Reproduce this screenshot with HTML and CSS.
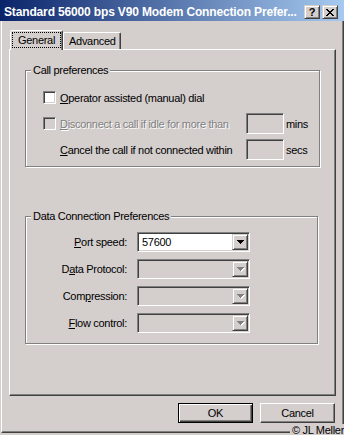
FILE: index.html
```html
<!DOCTYPE html>
<html lang="en">
  <head>
    <meta charset="UTF-8" />
    <meta name="viewport" content="width=device-width, initial-scale=1.0" />
    <title>Modem Connection Preferences</title>
    <link rel="stylesheet" href="styles.css">
  </head>
  <body>
    <div class="window">
      <div class="titlebar">
        <span class="title">Standard 56000 bps V90 Modem Connection Prefer...</span>
        <div class="caption-buttons">
          <span class="cap-btn help">?</span>
          <span class="cap-btn close">
            <svg width="8" height="7" viewBox="0 0 8 7">
              <path d="M0 0h2v1H0zM6 0h2v1H6zM1 1h2v1H1zM5 1h2v1H5zM2 2h4v1H2zM3 3h2v1H3zM2 4h4v1H2zM1 5h2v1H1zM5 5h2v1H5zM0 6h2v1H0zM6 6h2v1H6z" />
            </svg>
          </span>
        </div>
      </div>

      <div class="client">
        <div class="tabs">
          <div class="tab selected"><span class="focus">General</span></div>
          <div class="tab">Advanced</div>
        </div>

        <div class="panel">
          <div class="group group-call">
            <span class="group-label">Call preferences</span>
            <div class="call-grid">
              <span class="check"></span>
              <span class="wide"><u>O</u>perator assisted (manual) dial</span>

              <span class="check off"></span>
              <span class="disabled"><u>D</u>isconnect a call if idle for more than</span>
              <span class="edit"></span>
              <span class="unit">mins</span>

              <span></span>
              <span><u>C</u>ancel the call if not connected within</span>
              <span class="edit"></span>
              <span class="unit">secs</span>
            </div>
          </div>

          <div class="group group-data">
            <span class="group-label">Data Connection Preferences</span>
            <div class="data-grid">
              <label><u>P</u>ort speed:</label>
              <div class="combo">
                <span class="value">57600</span>
                <span class="drop">
                  <svg width="7" height="4" viewBox="0 0 7 4"><path d="M0 0h7v1H0zM1 1h5v1H1zM2 2h3v1H2zM3 3h1v1H3z" /></svg>
                </span>
              </div>

              <label>D<u>a</u>ta Protocol:</label>
              <div class="combo off">
                <span class="value"></span>
                <span class="drop">
                  <svg width="8" height="5" viewBox="0 0 8 5"><path class="arrow-hi" d="M1 1h7v1H1zM2 2h5v1H2zM3 3h3v1H3zM4 4h1v1H4z" /><path class="arrow-lo" d="M0 0h7v1H0zM1 1h5v1H1zM2 2h3v1H2zM3 3h1v1H3z" /></svg>
                </span>
              </div>

              <label>Com<u>p</u>ression:</label>
              <div class="combo off">
                <span class="value"></span>
                <span class="drop">
                  <svg width="8" height="5" viewBox="0 0 8 5"><path class="arrow-hi" d="M1 1h7v1H1zM2 2h5v1H2zM3 3h3v1H3zM4 4h1v1H4z" /><path class="arrow-lo" d="M0 0h7v1H0zM1 1h5v1H1zM2 2h3v1H2zM3 3h1v1H3z" /></svg>
                </span>
              </div>

              <label><u>F</u>low control:</label>
              <div class="combo off">
                <span class="value"></span>
                <span class="drop">
                  <svg width="8" height="5" viewBox="0 0 8 5"><path class="arrow-hi" d="M1 1h7v1H1zM2 2h5v1H2zM3 3h3v1H3zM4 4h1v1H4z" /><path class="arrow-lo" d="M0 0h7v1H0zM1 1h5v1H1zM2 2h3v1H2zM3 3h1v1H3z" /></svg>
                </span>
              </div>
            </div>
          </div>
        </div>

        <div class="buttons">
          <div class="btn default">OK</div>
          <div class="btn">Cancel</div>
        </div>
      </div>

      <div class="credit">© JL Meller</div>
    </div>
  </body>
</html>
```

FILE: styles.css
```css
:root {
  --face: #d4cecd;
  --shadow: #808080;
  --dark: #404040;
  --hi: #ffffff;
}

body {
  margin: 0;
  background-color: var(--face);
  font-family: "Liberation Sans", Arial, sans-serif;
  font-size: 11px;
  letter-spacing: -0.3px;
  color: #000;
}

.window {
  position: relative;
  width: 344px;
  height: 435px;
  overflow: hidden;
}

/* title bar */
.titlebar {
  height: 21px;
  box-sizing: border-box;
  padding: 3px 6px 0 4px;
  display: flex;
  align-items: center;
  justify-content: space-between;
  background: linear-gradient(to right, #0a246a, #a6caf0);
}

.title {
  color: #fff;
  font-weight: bold;
  font-size: 12px;
  letter-spacing: -0.15px;
  white-space: nowrap;
}

.caption-buttons {
  display: flex;
  gap: 2px;
}

.cap-btn {
  width: 16px;
  height: 14px;
  box-sizing: border-box;
  background: var(--face);
  border: 1px solid;
  border-color: var(--face) var(--dark) var(--dark) var(--face);
  box-shadow: inset 1px 1px var(--hi), inset -1px -1px var(--shadow);
  display: flex;
  align-items: center;
  justify-content: center;
}

.help {
  font-weight: bold;
  font-size: 11px;
  line-height: 11px;
  letter-spacing: 0;
}

/* window body */
.client {
  margin-left: 1px;
  height: 412px;
  box-sizing: border-box;
  padding-top: 9px;
  border-left: 1px solid var(--hi);
  border-right: 1px solid var(--dark);
  border-bottom: 1px solid var(--dark);
  box-shadow: inset -1px -1px var(--shadow);
  display: flex;
  flex-direction: column;
}

.tabs {
  height: 19px;
  padding-left: 8px;
  display: flex;
  align-items: flex-end;
}

.tab {
  height: 17px;
  box-sizing: border-box;
  padding: 0 4px 0 5px;
  border: 1px solid;
  border-bottom: none;
  border-color: var(--hi) var(--dark) transparent var(--hi);
  border-radius: 2px 2px 0 0;
  box-shadow: inset -1px 0 var(--shadow);
  display: flex;
  align-items: center;
}

.tab.selected {
  position: relative;
  z-index: 1;
  height: 20px;
  margin-bottom: -1px;
  padding: 0 1px;
  background: var(--face);
  align-items: flex-start;
}

.focus {
  height: 16px;
  box-sizing: border-box;
  margin-top: 1px;
  padding: 0 5px;
  border: 1px dotted #000;
  display: flex;
  align-items: center;
}

.panel {
  margin: 0 7px;
  height: 347px;
  box-sizing: border-box;
  padding: 20px 0 0 15px;
  border: 1px solid;
  border-color: var(--hi) var(--dark) var(--dark) var(--hi);
  box-shadow: inset -1px -1px var(--shadow);
}

/* group boxes */
.group {
  position: relative;
  box-sizing: border-box;
  border: 1px solid var(--shadow);
  box-shadow: inset 1px 1px var(--hi), 1px 1px var(--hi);
}

.group-label {
  position: absolute;
  top: -7px;
  left: 5px;
  padding: 0 2px;
  line-height: 13px;
  background: var(--face);
  white-space: nowrap;
}

.group-call {
  width: 295px;
  padding: 16px 0 6px 17px;
}

.group-data {
  width: 293px;
  margin-top: 49px;
  padding: 15px 0 10px 0;
}

.call-grid {
  display: grid;
  grid-template-columns: 17px 186px 38px auto;
  grid-template-rows: repeat(3, 21px);
  row-gap: 5px;
  align-items: center;
  white-space: nowrap;
}

.wide {
  grid-column: 2 / 5;
}

.check {
  width: 13px;
  height: 13px;
  box-sizing: border-box;
  background: #fff;
  border: 1px solid;
  border-color: var(--shadow) var(--hi) var(--hi) var(--shadow);
  box-shadow: inset 1px 1px var(--dark), inset -1px -1px var(--face);
}

.check.off {
  background: var(--face);
}

.disabled {
  color: var(--shadow);
  text-shadow: 1px 1px var(--hi);
}

.edit {
  height: 21px;
  box-sizing: border-box;
  background: var(--face);
  border: 1px solid;
  border-color: var(--shadow) var(--hi) var(--hi) var(--shadow);
  box-shadow: inset 1px 1px var(--dark), inset -1px -1px var(--face);
}

.unit {
  padding-left: 2px;
}

.data-grid {
  display: grid;
  grid-template-columns: 101px 113px;
  grid-template-rows: repeat(4, 20px);
  column-gap: 10px;
  row-gap: 7px;
  align-items: center;
  white-space: nowrap;
}

.data-grid label {
  text-align: right;
}

.combo {
  height: 20px;
  box-sizing: border-box;
  padding: 1px 1px 1px 4px;
  background: #fff;
  border: 1px solid;
  border-color: var(--shadow) var(--hi) var(--hi) var(--shadow);
  box-shadow: inset 1px 1px var(--dark), inset -1px -1px var(--face);
  display: flex;
  align-items: center;
  justify-content: space-between;
}

.combo.off {
  background: var(--face);
}

.drop {
  width: 16px;
  height: 16px;
  box-sizing: border-box;
  background: var(--face);
  border: 1px solid;
  border-color: var(--face) var(--dark) var(--dark) var(--face);
  box-shadow: inset 1px 1px var(--hi), inset -1px -1px var(--shadow);
  display: flex;
  align-items: center;
  justify-content: center;
}

.drop svg {
  fill: #000;
}

.arrow-hi {
  fill: var(--hi);
}

.arrow-lo {
  fill: var(--shadow);
}

.combo .drop svg:has(.arrow-lo) {
  margin: 1px 0 0 1px;
}

/* dialog buttons */
.buttons {
  margin-top: 7px;
  padding-right: 8px;
  display: flex;
  justify-content: flex-end;
  gap: 7px;
}

.btn {
  width: 75px;
  height: 20px;
  box-sizing: border-box;
  border: 1px solid;
  border-color: var(--hi) var(--dark) var(--dark) var(--hi);
  box-shadow: inset -1px -1px var(--shadow);
  display: flex;
  align-items: center;
  justify-content: center;
}

.btn.default {
  border-color: #000;
  box-shadow: inset 1px 1px var(--hi), inset -1px -1px var(--dark), inset -2px -2px var(--shadow);
}

.credit {
  position: absolute;
  right: 0;
  bottom: -1px;
  padding-left: 2px;
  line-height: 12px;
  background: var(--face);
  white-space: nowrap;
}
```
